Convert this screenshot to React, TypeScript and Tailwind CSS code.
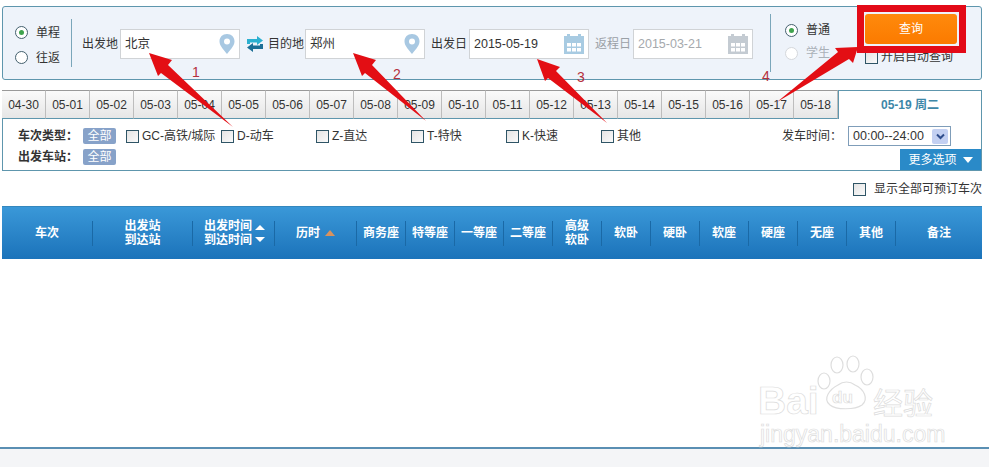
const DATES = ['04-30','05-01','05-02','05-03','05-04','05-05','05-06','05-07','05-08','05-09','05-10','05-11','05-12','05-13','05-14','05-15','05-16','05-17','05-18']
const TYPES = ['GC-高铁/城际','D-动车','Z-直达','T-特快','K-快速','其他']
const SEATS = ['商务座','特等座','一等座','二等座','','软卧','硬卧','软座','硬座','无座','其他']

function Pin() {
  return (
    <svg width="16" height="20" viewBox="0 0 16 20" className="shrink-0">
      <path d="M8 0C3.500 0 0.500 3.200 0.500 7.400 0.500 12 5.500 16.500 8 20c2.500-3.500 7.500-8 7.500-12.600C15.500 3.200 12.500 0 8 0z" fill="#a8c8e2" />
      <circle cx="8" cy="7.500" r="3" fill="#fff" />
    </svg>
  )
}

function Calendar({ color }: { color: string }) {
  return (
    <svg width="20" height="20" viewBox="0 0 20 20" className="shrink-0">
      <rect x="0" y="2" width="20" height="18" fill={color} />
      <rect x="3" y="0" width="3" height="4" fill={color} />
      <rect x="14" y="0" width="3" height="4" fill={color} />
      {[3, 8, 13].map(x => [9, 14].map(y => <rect key={`${x}-${y}`} x={x} y={y} width="4" height="3.500" fill="#fff" />))}
    </svg>
  )
}

function Swap() {
  return (
    <svg width="16" height="16" viewBox="0 0 16 16" className="shrink-0">
      <path d="M0 8V3h10V0l6 4.500L10 9V6.500H3V8z" fill="#2bb0d0" />
      <path d="M16 8v5H6v3l-6-4.500L6 7v2.500h7V8z" fill="#1c6f96" />
    </svg>
  )
}

function Radio({ on, off, label }: { on?: boolean; off?: boolean; label: string }) {
  return (
    <div className={`flex items-center gap-[8px] ${off ? 'text-[#aab1b8]' : 'text-[#333]'}`}>
      <span className={`w-[13px] h-[13px] rounded-full border flex items-center justify-center bg-white ${off ? 'border-[#d5d8dc]' : 'border-[#44606e]'}`}>
        {on && <span className="w-[5px] h-[5px] rounded-full bg-[#3fa34d]" />}
      </span>
      {label}
    </div>
  )
}

function Check({ label, gap = 'gap-[3px]' }: { label: string; gap?: string }) {
  return (
    <div className={`flex items-center text-[#333] whitespace-nowrap ${gap}`}>
      <span className="w-[13px] h-[13px] shrink-0 border border-[#2f5566] bg-gradient-to-br from-[#e4e4e4] to-[#fafafa]" />
      {label}
    </div>
  )
}

function Field({ value, disabled, icon }: { value: string; disabled?: boolean; icon: React.ReactNode }) {
  return (
    <div className={`w-[120px] h-[30px] shrink-0 border border-[#d0d3d6] bg-white flex items-center justify-between pl-[4px] pr-[4px] text-[12.500px] ${disabled ? 'text-[#a5a9ad]' : 'text-[#333]'}`}>
      <span>{value}</span>
      {icon}
    </div>
  )
}

function Badge() {
  return <span className="w-[33px] h-[16px] rounded-[2px] bg-[#87a2c9] text-white flex items-center justify-center">全部</span>
}

function Th({ children, className = '' }: { children: React.ReactNode; className?: string }) {
  return (
    <div className={`h-[25px] flex items-center justify-center gap-[3px] leading-[14px] text-center border-r border-[#1a69a6] ${className}`}>
      {children}
    </div>
  )
}

function Arrows() {
  return (
    <svg width="989" height="467" viewBox="0 0 989 467" className="absolute left-0 top-0 pointer-events-none">
      <g fill="#e30e14">
        <polygon points="149,53 172,60 168,65 233,127 161,73 158,76" />
        <polygon points="353,53 376,60 372,65 426,121 365,73 362,76" />
        <polygon points="537,59 560,67 556,71 607,123 548,78 545,81" />
        <polygon points="858,47 853,63 849,59 777,102 838,52 835,48" />
      </g>
    </svg>
  )
}

function Watermark() {
  return (
    <div className="absolute left-[758px] top-[355px] w-[190px] h-[92px] pointer-events-none text-transparent [-webkit-text-stroke:0.7px_#dcdcdc] font-['Liberation_Sans',sans-serif]">
      <span className="absolute left-[0px] top-[24px] text-[39px] leading-[44px] font-bold">Bai</span>
      <svg width="64" height="62" viewBox="0 0 64 62" className="absolute left-[58px] top-0" fill="#fff" stroke="#dedede" strokeWidth="1.200">
        <ellipse cx="21" cy="10" rx="6" ry="8" />
        <ellipse cx="37" cy="9" rx="6" ry="8" />
        <ellipse cx="51" cy="22" rx="6" ry="8" />
        <ellipse cx="8" cy="26" rx="6" ry="8" />
        <path d="M14 50c-8-6 0-16 8-20 5-4 12-4 17 0 9 4 14 14 7 20-7 5-26 5-32 0z" />
      </svg>
      <span className="absolute left-[74px] top-[33px] text-[17px] leading-[20px] font-bold">du</span>
      <span className="absolute left-[115px] top-[29px] text-[30px] leading-[34px] font-['Noto_Sans_CJK_SC',sans-serif]">经验</span>
      <span className="absolute left-[2px] top-[66px] text-[23px] leading-[26px]">jingyan.baidu.com</span>
    </div>
  )
}

export default function App() {
  return (
    <div className="relative h-[467px] w-[989px] overflow-hidden flex flex-col bg-white text-[12px] font-['Liberation_Sans','Noto_Sans_CJK_SC',sans-serif]">
      <div className="w-[980px] ml-[2px] mt-[6px] h-[74px] shrink-0 border border-[#5e96ad] rounded-[3px] bg-[#eef3fa] flex items-center text-[#333]">
        <div className="w-[68px] pl-[12px] pt-[4px] flex flex-col gap-[7px]">
          <Radio on label="单程" />
          <Radio label="往返" />
        </div>
        <div className="w-px h-[48px] bg-[#7aa6ba]" />
        <div className="flex items-center pt-[2px] whitespace-nowrap">
          <div className="ml-[10px] w-[35px] shrink-0">出发地</div>
          <div className="ml-[3px]"><Field value="北京" icon={<Pin />} /></div>
          <div className="ml-[7px]"><Swap /></div>
          <div className="ml-[5px] w-[34px] shrink-0">目的地</div>
          <div className="ml-[3px]"><Field value="郑州" icon={<Pin />} /></div>
          <div className="ml-[6px] w-[35px] shrink-0">出发日</div>
          <div className="ml-[3px]"><Field value="2015-05-19" icon={<Calendar color="#a8cbe2" />} /></div>
          <div className="ml-[6px] w-[35px] shrink-0 text-[#9aa0a6]">返程日</div>
          <div className="ml-[3px]"><Field value="2015-03-21" disabled icon={<Calendar color="#c4cbd2" />} /></div>
        </div>
        <div className="ml-[17px] w-px h-[58px] bg-[#7aa6ba]" />
        <div className="ml-[14px] w-[80px] flex flex-col gap-[5px] pb-[3px]">
          <Radio on label="普通" />
          <Radio off label="学生" />
        </div>
        <div className="flex flex-col pb-[6px]">
          <div className="relative">
            <button className="w-[92px] h-[30px] rounded-[3px] bg-gradient-to-b from-[#ff8a0c] to-[#fb7a00] text-white">查询</button>
            <div className="absolute left-[-8px] top-[-9px] w-[109px] h-[48px] border-[7px] border-[#e30a17]" />
          </div>
          <div className="mt-[4px]"><Check label="开启自动查询" /></div>
        </div>
      </div>

      <div className="w-[980px] ml-[2px] mt-[10px] h-[81px] shrink-0 border border-[#5e96ad] flex flex-col">
        <div className="flex h-[29px] shrink-0 -ml-px -mt-px">
          {DATES.map(d => (
            <div key={d} className="w-[44px] shrink-0 flex items-center justify-center text-[#333] bg-gradient-to-b from-[#fafafa] to-[#e6e6e6] border-r border-b border-r-[#bdbdbd] border-b-[#5e96ad] border-t border-t-[#999]">
              {d}
            </div>
          ))}
          <div className="flex-1 border-l border-[#5e96ad] flex items-center justify-center font-bold text-[#3d87a8] pt-px">05-19 周二</div>
        </div>
        <div className="relative flex-1 text-[#333]">
          <div className="flex items-center pl-[15px] pt-[7px]">
            <div className="w-[65px] font-bold">车次类型：</div>
            <Badge />
            <div className="ml-[10px] grid grid-cols-[95px_95px_95px_95px_95px_95px] w-[570px]">
              {TYPES.map(t => <Check key={t} label={t} />)}
            </div>
            <div className="ml-[86px] w-[66px]">发车时间：</div>
            <div className="w-[103px] h-[20px] border border-[#7f9db9] bg-white flex items-center justify-between pl-[4px] pr-[2px] text-[12.500px]">
              00:00--24:00
              <span className="w-[16px] h-[15px] rounded-[2px] bg-[#c3d0f2] flex items-center justify-center">
                <svg width="9" height="7" viewBox="0 0 9 7"><path d="M1 1.500l3.500 3.500L8 1.500" fill="none" stroke="#2f4d8c" strokeWidth="2" /></svg>
              </span>
            </div>
          </div>
          <div className="flex items-center pl-[15px] pt-[2px]">
            <div className="w-[65px] font-bold">出发车站：</div>
            <Badge />
          </div>
          <button className="absolute right-0 bottom-0 w-[81px] h-[21px] bg-[#2a8ac8] text-white flex items-center justify-center gap-[6px]">
            更多选项
            <svg width="10" height="6" viewBox="0 0 10 6"><path d="M0 0h10L5 6z" fill="#fff" /></svg>
          </button>
        </div>
      </div>

      <div className="w-[980px] ml-[2px] mt-[11px] h-[14px] shrink-0 flex justify-end">
        <Check label="显示全部可预订车次" gap="gap-[8px]" />
      </div>

      <div className="w-[980px] ml-[2px] mt-[10px] h-[53px] shrink-0 border-t border-[#3487bd] bg-gradient-to-b from-[#3a98d8] to-[#1b73ba] text-white font-bold grid grid-cols-[91px_100px_82px_82px_repeat(11,49px)_86px] items-center">
        <Th>车次</Th>
        <Th>出发站<br />到达站</Th>
        <Th className="pl-[2px]">
          <span>出发时间<br />到达时间</span>
          <span className="flex flex-col gap-[7px]">
            <svg width="10" height="5" viewBox="0 0 10 5"><path d="M0 5h10L5 0z" fill="#fff" /></svg>
            <svg width="10" height="5" viewBox="0 0 10 5"><path d="M0 0h10L5 5z" fill="#fff" /></svg>
          </span>
        </Th>
        <Th>
          历时
          <svg width="10" height="6" viewBox="0 0 10 6" className="ml-[2px]"><path d="M0 6h10L5 0z" fill="#d9925e" /></svg>
        </Th>
        {SEATS.map((s, i) => <Th key={i}>{s || <span>高级<br />软卧</span>}</Th>)}
        <div className="text-center">备注</div>
      </div>

      <div className="mt-auto h-[20px] shrink-0 border-t-2 border-[#5a8fb3] bg-[#f4f5f7]" />

      <Watermark />
      <Arrows />
      <span className="absolute left-[192px] top-[64px] text-[14px] leading-[16px] text-[#b5303c]">1</span>
      <span className="absolute left-[393px] top-[66px] text-[14px] leading-[16px] text-[#b5303c]">2</span>
      <span className="absolute left-[577px] top-[69px] text-[14px] leading-[16px] text-[#b5303c]">3</span>
      <span className="absolute left-[762px] top-[68px] text-[14px] leading-[16px] text-[#b5303c]">4</span>
    </div>
  )
}
